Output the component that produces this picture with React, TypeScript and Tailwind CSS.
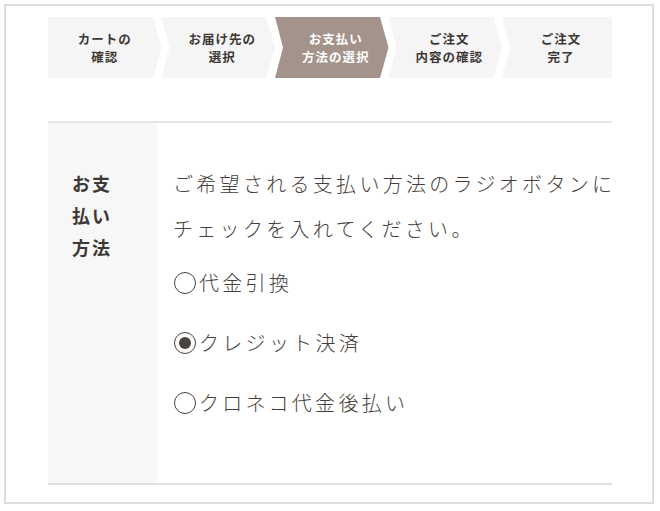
import React from "react";

type Step = { lines: string[]; active?: boolean };

const steps: Step[] = [
  { lines: ["カートの", "確認"] },
  { lines: ["お届け先の", "選択"] },
  { lines: ["お支払い", "方法の選択"], active: true },
  { lines: ["ご注文", "内容の確認"] },
  { lines: ["ご注文", "完了"] },
];

const options = [
  { label: "代金引換", checked: false },
  { label: "クレジット決済", checked: true },
  { label: "クロネコ代金後払い", checked: false },
];

const font = "font-['Noto_Sans_CJK_JP','Noto_Sans',sans-serif]";

function StepBar() {
  return (
    <div className="flex h-[61px] w-[564px]">
      {steps.map((step, i) => {
        const first = i === 0;
        const last = i === steps.length - 1;
        // 矢印の形
        const shape = first
          ? "[clip-path:polygon(0_0,105px_0,100%_50%,105px_100%,0_100%)]"
          : last
            ? "[clip-path:polygon(0_0,100%_0,100%_100%,0_100%,8px_50%)]"
            : "[clip-path:polygon(0_0,105px_0,100%_50%,105px_100%,0_100%,8px_50%)]";
        return (
          <div
            key={i}
            className={[
              "flex h-full flex-col items-center justify-center",
              last ? "flex-1 pl-[8px]" : "w-[113.5px] shrink-0",
              !first && !last ? "pl-[8px]" : "",
              step.active ? "bg-[#a4938a] text-white" : "bg-[#f5f5f5] text-[#3d3835]",
              shape,
            ].join(" ")}
          >
            {step.lines.map((line) => (
              <span
                key={line}
                className="text-[12.5px] font-bold leading-[18px] tracking-[1px] whitespace-nowrap"
              >
                {line}
              </span>
            ))}
          </div>
        );
      })}
    </div>
  );
}

function Radio({ checked }: { checked: boolean }) {
  return (
    <span className="mr-[3px] flex h-[22px] w-[22px] shrink-0 items-center justify-center rounded-full border-[1.5px] border-[#4a4340]">
      {checked && <span className="h-[12px] w-[12px] rounded-full bg-[#4a4340]" />}
    </span>
  );
}

export default function App() {
  return (
    <div className={`h-[511px] w-[660px] bg-white p-[4px] ${font}`}>
      <div className="h-[500px] w-[650px] border-2 border-[#dddddd] pl-[42px] pt-[11px]">
        <StepBar />

        <div className="mt-[43px] flex h-[364px] w-[564px] border-y-2 border-t-[#e6e6e6] border-b-[#e0e0e0]">
          <div className="w-[109px] shrink-0 bg-[#f7f7f7] pl-[24px] pt-[44px]">
            <p className="text-[18px] font-bold leading-[32px] tracking-[2px] text-[#3d3835]">
              お支
              <br />
              払い
              <br />
              方法
            </p>
          </div>

          <div className="flex-1 pl-[16px] pt-[38px] text-[#453e3a]">
            <p className="text-[20px] font-light leading-[45px] tracking-[3.3px] whitespace-nowrap">
              ご希望される支払い方法のラジオボタンに
              <br />
              チェックを入れてください。
            </p>
            <div className="mt-[2px]">
              {options.map((opt) => (
                <label
                  key={opt.label}
                  className="flex h-[60px] items-center pl-[1px] text-[20px] font-light tracking-[3.3px]"
                >
                  <Radio checked={opt.checked} />
                  {opt.label}
                </label>
              ))}
            </div>
          </div>
        </div>
      </div>
    </div>
  );
}
